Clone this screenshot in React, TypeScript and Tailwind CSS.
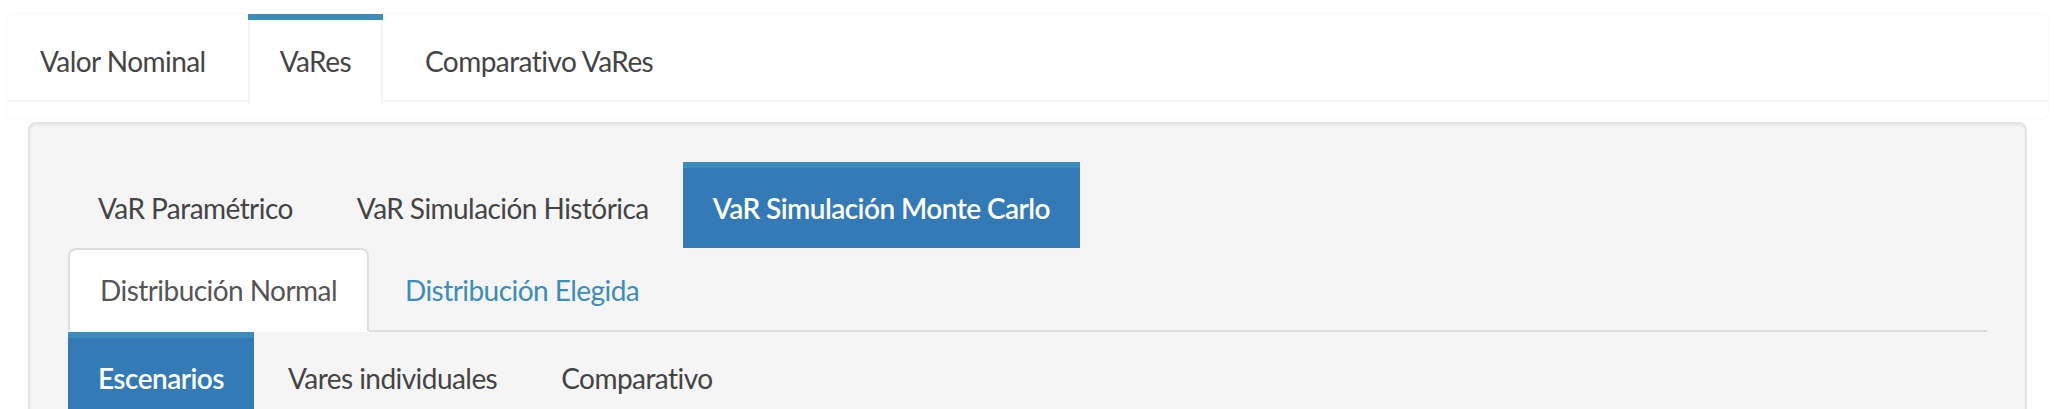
import React from "react";

const outerTabs = ["Valor Nominal", "VaRes", "Comparativo VaRes"];
const varTabs = ["VaR Paramétrico", "VaR Simulación Histórica", "VaR Simulación Monte Carlo"];
const distTabs = ["Distribución Normal", "Distribución Elegida"];
const subTabs = ["Escenarios", "Vares individuales", "Comparativo"];

function Pills({ items, active }: { items: string[]; active: number }) {
  return (
    <ul className="flex gap-[4px]">
      {items.map((label, i) => (
        <li key={label}>
          <a
            className={
              i === active
                ? "block border-t-[6px] border-[#3c8dbc] bg-[#337ab7] px-[30px] py-[20px] leading-[40px] font-semibold text-white"
                : "block border-t-[6px] border-transparent px-[30px] py-[20px] leading-[40px] text-[#444]"
            }
          >
            {label}
          </a>
        </li>
      ))}
    </ul>
  );
}

export default function App() {
  const activeOuter = 1;
  const activeDist = 0;

  return (
    <div className="min-h-screen bg-white pt-[14px] pl-[7px] pr-[12px] font-[family-name:Lato,sans-serif] text-[28px] tracking-[-0.55px]">
      {/* outer tab box */}
      <div className="h-[104px] rounded-[6px] bg-white shadow-[0_0_2px_rgba(0,0,0,0.09)]">
        <ul className="flex h-[88px] items-start border-b-2 border-[#f4f4f4] pl-[1px]">
          {outerTabs.map((label, i) => (
            <li
              key={label}
              className={
                i === activeOuter
                  ? "mr-[10px] border-t-[6px] border-[#3c8dbc] bg-white"
                  : "mr-[10px] border-t-[6px] border-transparent"
              }
            >
              <a
                className={
                  i === activeOuter
                    ? "block border-x-2 border-[#f4f4f4] px-[30px] pt-[21px] pb-[23px] leading-[40px] text-[#444]"
                    : "block border-x-2 border-transparent px-[30px] pt-[21px] pb-[23px] leading-[40px] text-[#444]"
                }
              >
                {label}
              </a>
            </li>
          ))}
        </ul>
      </div>

      {/* well */}
      <div className="mx-[21px] mt-[4px] rounded-[8px] border-2 border-[#e3e3e3] bg-[#f5f5f5] p-[38px] shadow-[inset_0_2px_2px_rgba(0,0,0,0.05)]">
        <Pills items={varTabs} active={2} />

        <ul className="flex border-b-2 border-[#ddd]">
          {distTabs.map((label, i) => (
            <li key={label} className="-mb-[2px] mr-[4px]">
              <a
                className={
                  i === activeDist
                    ? "block rounded-t-[8px] border-2 border-[#ddd] border-b-transparent bg-white px-[30px] py-[20px] leading-[40px] text-[#555]"
                    : "block rounded-t-[8px] border-2 border-transparent px-[30px] py-[20px] leading-[40px] text-[#3c8dbc]"
                }
              >
                {label}
              </a>
            </li>
          ))}
        </ul>

        <Pills items={subTabs} active={0} />
      </div>
    </div>
  );
}
